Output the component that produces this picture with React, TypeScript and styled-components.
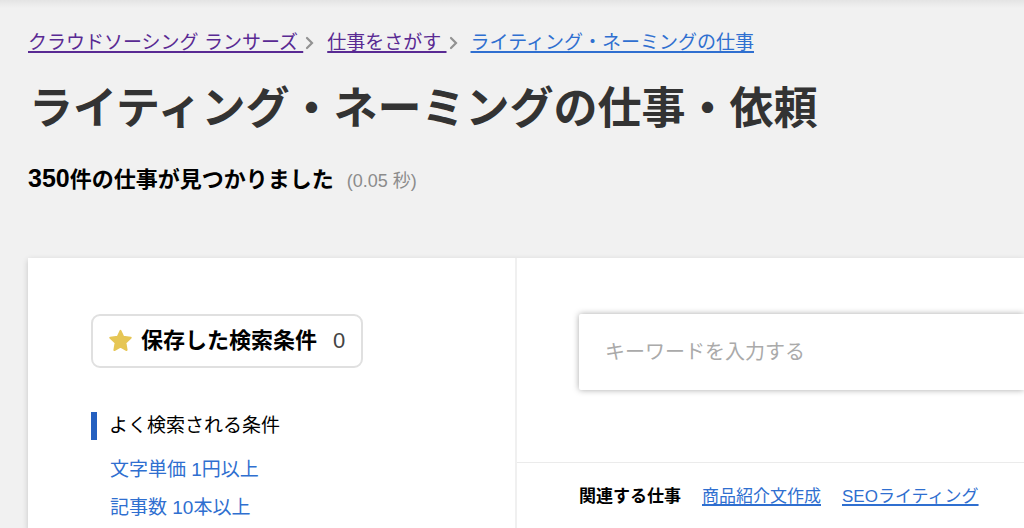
import React from 'react';
import styled, { createGlobalStyle } from 'styled-components';

const GlobalStyle = createGlobalStyle`
  *, *::before, *::after { box-sizing: border-box; }
  html { background: #f1f1f1; }
  body {
    margin: 0;
    overflow: hidden;
    color: #000;
    font-family: "Liberation Sans", "Noto Sans CJK JP", sans-serif;
    font-size: 19px;
    line-height: 28px;
  }
  h1, h2, p, ul, ol { margin: 0; padding: 0; }
  ul, ol { list-style: none; }
`;

const Page = styled.div`
  min-height: 100vh;
  padding-left: 28px;
  background: #f1f1f1 linear-gradient(#e4e4e4, #f1f1f1) 0 0 / 100% 8px no-repeat;
`;

const Breadcrumbs = styled.ol`
  display: flex;
  align-items: center;
  padding-top: 29px;
  white-space: nowrap;
`;

const Crumb = styled.li`
  display: flex;
  align-items: center;
`;

const TextLink = styled.a<{ $visited?: boolean }>`
  color: ${({ $visited }) => ($visited ? '#592a93' : '#2f6fd0')};
  text-decoration: underline;
  text-decoration-thickness: 2px;
  text-decoration-skip-ink: none;
  text-underline-offset: 2px;
  white-space: pre;
`;

const Chevron = styled.svg`
  width: 10px;
  height: 14px;
  margin: 0 12px 0 2px;
`;

const Title = styled.h1`
  margin-top: 20px;
  padding-left: 1px;
  color: #333;
  font-size: 44px;
  line-height: 64px;
  white-space: nowrap;
`;

const Summary = styled.p`
  display: flex;
  align-items: baseline;
  gap: 13px;
  margin-top: 21px;
  white-space: nowrap;
`;

const Count = styled.strong`
  font-size: 22px;
  line-height: 32px;
`;

const CountNumber = styled.span`
  font-size: 25px;
`;

const Elapsed = styled.span`
  color: #8c8c8c;
  font-size: 18px;
`;

const Panel = styled.main`
  display: grid;
  grid-template-columns: 489px 1fr;
  margin-top: 62px;
  background: #fff;
  box-shadow: 0 2px 6px rgba(0, 0, 0, 0.18);
`;

const Sidebar = styled.aside`
  padding: 56px 63px 0;
  border-right: 2px solid #f0f0f0;
`;

const SavedButton = styled.button`
  display: flex;
  align-items: center;
  height: 54px;
  padding: 0 16px;
  border: 2px solid #e0e0e0;
  border-radius: 9px;
  background: #fff;
  color: #000;
  font: bold 22px/32px "Liberation Sans", "Noto Sans CJK JP", sans-serif;
  white-space: nowrap;
`;

const Star = styled.svg`
  width: 24px;
  height: 24px;
  margin-right: 8px;
`;

const SavedCount = styled.span`
  margin-left: 16px;
  color: #444;
  font-weight: 400;
`;

const GroupTitle = styled.h2`
  margin-top: 44px;
  padding-left: 12px;
  border-left: 6px solid #2460c0;
  font-size: 19px;
  font-weight: 400;
  line-height: 28px;
`;

const Conditions = styled.ul`
  display: grid;
  gap: 10px;
  margin-top: 16px;
  padding: 0 0 7px 19px;
`;

const ConditionLink = styled.a`
  color: #2f6fd0;
  text-decoration: none;
`;

const Results = styled.section`
  min-width: 0;
`;

const SearchArea = styled.div`
  padding: 56px 0 72px 62px;
  border-bottom: 1px solid #ebebeb;
`;

const KeywordInput = styled.input`
  display: block;
  width: 100%;
  height: 76px;
  padding: 0 26px;
  border: 0;
  border-radius: 2px 0 0 2px;
  background: #fff;
  box-shadow: 0 0 6px rgba(0, 0, 0, 0.34);
  font: 20px/28px "Liberation Sans", "Noto Sans CJK JP", sans-serif;
  &::placeholder { color: #aaa; opacity: 1; }
`;

const Related = styled.nav`
  display: flex;
  gap: 21px;
  padding: 20px 0 0 62px;
  font-size: 17px;
  white-space: nowrap;
`;

const crumbs = [
  { label: 'クラウドソーシング ランサーズ ', visited: true },
  { label: '仕事をさがす ', visited: true },
  { label: 'ライティング・ネーミングの仕事', visited: false },
];

export default function App() {
  return (
    <Page>
      <GlobalStyle />
      <nav aria-label="パンくずリスト">
        <Breadcrumbs>
          {crumbs.map((c, i) => (
            <Crumb key={c.label}>
              <TextLink href="#" $visited={c.visited}>{c.label}</TextLink>
              {i < crumbs.length - 1 && (
                <Chevron viewBox="0 0 10 14" aria-hidden="true">
                  <path d="M2 2l5 5-5 5" fill="none" stroke="#929292" strokeWidth="2.2" strokeLinecap="round" />
                </Chevron>
              )}
            </Crumb>
          ))}
        </Breadcrumbs>
      </nav>
      <Title>ライティング・ネーミングの仕事・依頼</Title>
      <Summary>
        <Count><CountNumber>350</CountNumber>件の仕事が見つかりました</Count>
        <Elapsed>(0.05 秒)</Elapsed>
      </Summary>
      <Panel>
        <Sidebar>
          <SavedButton type="button">
            <Star viewBox="0 0 24 24" aria-hidden="true">
              <path
                d="M11.500 1.800l2.800 6 7.400.9-5.300 5 1.200 7.300-6.100-3.300-6.100 3.300 1.200-7.300-5.300-5 7.400-.9z"
                fill="#e6c655"
                stroke="#e6c655"
                strokeWidth="2"
                strokeLinejoin="round"
              />
            </Star>
            保存した検索条件
            <SavedCount>0</SavedCount>
          </SavedButton>
          <GroupTitle>よく検索される条件</GroupTitle>
          <Conditions>
            <li><ConditionLink href="#">文字単価 1円以上</ConditionLink></li>
            <li><ConditionLink href="#">記事数 10本以上</ConditionLink></li>
          </Conditions>
        </Sidebar>
        <Results>
          <SearchArea>
            <KeywordInput type="text" aria-label="キーワード" placeholder="キーワードを入力する" />
          </SearchArea>
          <Related aria-label="関連する仕事">
            <strong>関連する仕事</strong>
            <TextLink href="#">商品紹介文作成</TextLink>
            <TextLink href="#">SEOライティング</TextLink>
          </Related>
        </Results>
      </Panel>
    </Page>
  );
}
